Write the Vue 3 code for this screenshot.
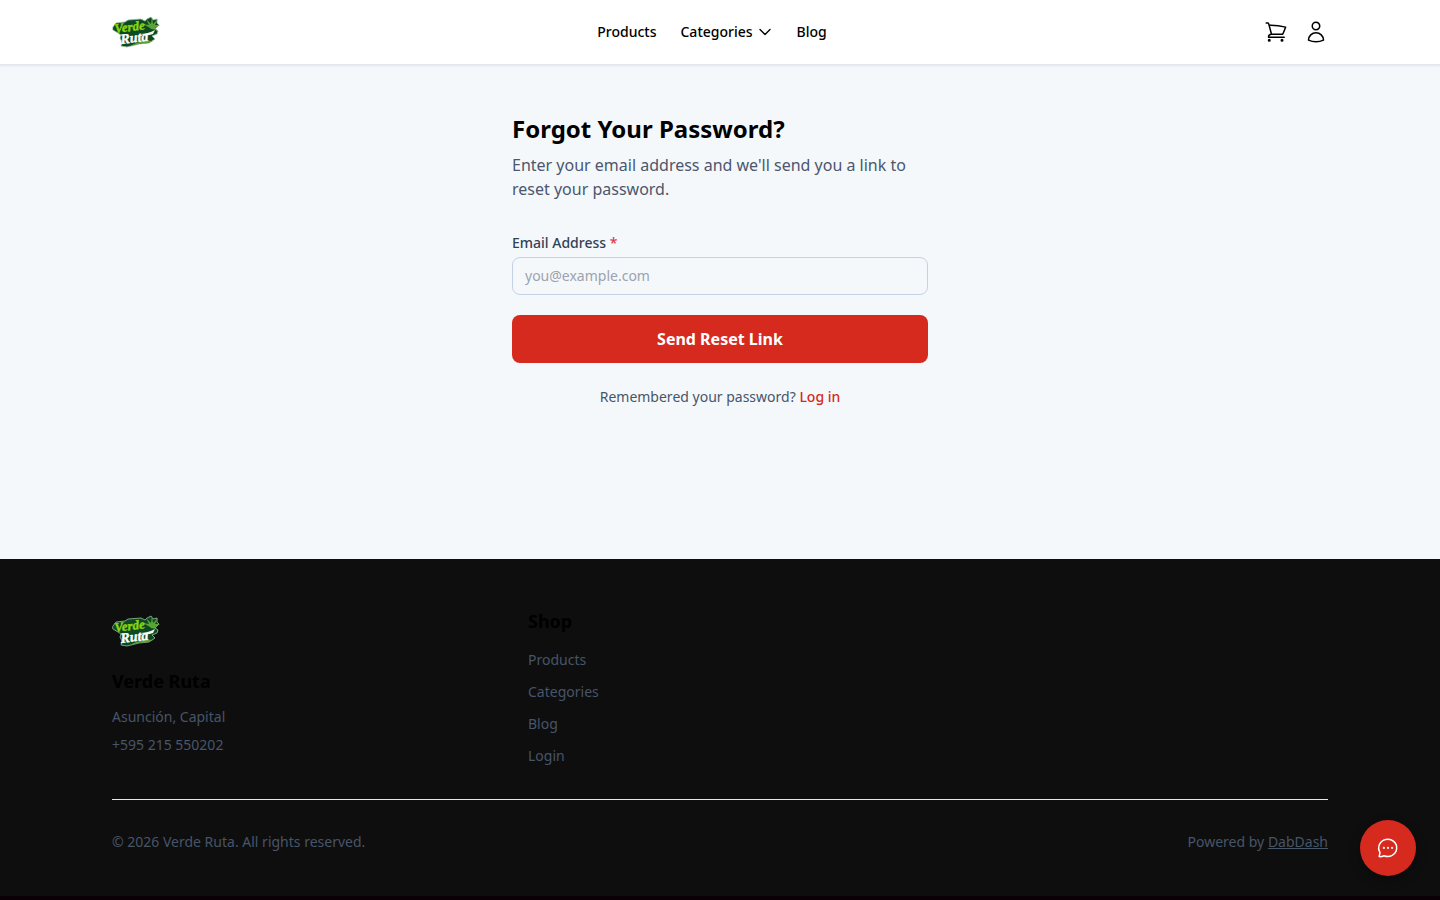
<script setup>
import { ref } from "vue";

const email = ref("");

const shopLinks = ["Products", "Categories", "Blog", "Login"];
</script>

<template>
  <div class="page">
    <header class="header">
      <div class="container header-inner">
        <a href="#" class="logo" aria-label="Verde Ruta">
          <svg viewBox="0 0 48 32">
            <!-- Logo artwork, reused in the footer -->
            <g id="brand-logo" stroke="none">
              <path
                d="M1 11 L4 7 L13 6 L16 4 L29 3 L33 5 L35 3 L39 1 L41 4 L45 3 L45 7 L47 9 L43 13 L46 15 L45 18 L40 20 L43 23 L37 27 L27 28 L15 31 L9 30 L10 26 L8 22 L9 19 L6 17 L1 14 Z"
                fill="#0b4a22"
                stroke="#9dbb9c"
                stroke-width=".8"
              />
              <path
                d="M38 12 L31 8 L37 9 L34 3 L39 8 L40 1 L41 8 L46 3 L43 9 L48 9 L43 12 L45 14 L39 13 Z"
                fill="#5aa334"
              />
              <path d="M18 30 Q28 24 41 25 L36 27 Q27 27 18 30 Z" fill="#5aa334" />
              <path d="M27 18 Q36 18 43 14 L41 18 Q36 20 32 19 Z" fill="#f2f6ee" />
              <text x="3" y="17" class="logo-verde" transform="rotate(-7 3 17)">Verde</text>
              <text x="9" y="28" class="logo-ruta" transform="rotate(-7 9 28)">Ruta</text>
            </g>
          </svg>
        </a>

        <nav class="nav">
          <a href="#">Products</a>
          <button type="button">
            Categories
            <svg viewBox="0 0 24 24" class="chevron">
              <path d="m19.5 8.25-7.5 7.5-7.5-7.5" />
            </svg>
          </button>
          <a href="#">Blog</a>
        </nav>

        <div class="actions">
          <a href="#" aria-label="Cart">
            <svg viewBox="0 0 24 24">
              <path
                d="M2.25 3h1.386c.51 0 .955.343 1.087.835l.383 1.437M7.5 14.25a3 3 0 0 0-3 3h15.75m-12.75-3h11.218c1.121-2.3 2.1-4.684 2.924-7.138a60.114 60.114 0 0 0-16.536-1.84M7.5 14.25 5.106 5.272M6 20.25a.75.75 0 1 1-1.5 0 .75.75 0 0 1 1.5 0Zm12.75 0a.75.75 0 1 1-1.5 0 .75.75 0 0 1 1.5 0Z"
              />
            </svg>
          </a>
          <a href="#" aria-label="Account">
            <svg viewBox="0 0 24 24">
              <path
                d="M15.75 6a3.75 3.75 0 1 1-7.5 0 3.75 3.75 0 0 1 7.5 0ZM4.501 20.118a7.5 7.5 0 0 1 14.998 0A17.933 17.933 0 0 1 12 21.75c-2.676 0-5.216-.584-7.499-1.632Z"
              />
            </svg>
          </a>
        </div>
      </div>
    </header>

    <main class="main">
      <h1>Forgot Your Password?</h1>
      <p class="intro">Enter your email address and we'll send you a link to reset your password.</p>

      <form @submit.prevent>
        <label for="email">Email Address <span class="required">*</span></label>
        <input id="email" v-model="email" type="email" placeholder="you@example.com" required />
        <button type="submit" class="submit">Send Reset Link</button>
      </form>

      <p class="login">Remembered your password? <a href="#">Log in</a></p>
    </main>

    <footer class="footer">
      <div class="container">
        <div class="columns">
          <div>
            <a href="#" class="logo" aria-label="Verde Ruta">
              <svg viewBox="0 0 48 32"><use href="#brand-logo" /></svg>
            </a>
            <h2 class="store-name">Verde Ruta</h2>
            <address>
              <p>Asunción, Capital</p>
              <p>+595 215 550202</p>
            </address>
          </div>
          <div>
            <h2>Shop</h2>
            <ul>
              <li v-for="link in shopLinks" :key="link">
                <a href="#">{{ link }}</a>
              </li>
            </ul>
          </div>
        </div>

        <div class="legal">
          <p>© 2026 Verde Ruta. All rights reserved.</p>
          <p>Powered by <a href="#">DabDash</a></p>
        </div>
      </div>
    </footer>

    <button type="button" class="chat" aria-label="Open chat">
      <svg viewBox="0 0 24 24">
        <path
          d="M8.625 9.75a.375.375 0 1 1-.75 0 .375.375 0 0 1 .75 0Zm4.125 0a.375.375 0 1 1-.75 0 .375.375 0 0 1 .75 0Zm4.125 0a.375.375 0 1 1-.75 0 .375.375 0 0 1 .75 0Z"
          transform="translate(-.4 2.2)"
        />
        <path d="M3.2 20.6 4 16.3A9 8.6 0 1 1 8 19.7Q5.500 20.900 3.200 20.600Z" />
      </svg>
    </button>
  </div>
</template>

<style>
body {
  margin: 0;
  background: #0a0005;
}
</style>

<style scoped>
.page {
  background: #f4f8fb;
  color: #000;
  font-family: "Noto Sans", sans-serif;
  font-size: 14px;
  line-height: 20px;
}
h1, h2, p, ul { margin: 0; padding: 0; }
a { color: inherit; text-decoration: none; }
button, input { font: inherit; color: inherit; }
button { padding: 0; border: 0; background: none; cursor: pointer; }
svg {
  display: block;
  fill: none;
  stroke: currentColor;
  stroke-width: 1.5;
  stroke-linecap: round;
  stroke-linejoin: round;
}

.logo-verde, .logo-ruta {
  font-family: "Liberation Serif", serif;
  font-style: italic;
  font-weight: 700;
  stroke-width: 0.4;
}
.logo-verde { font-size: 13px; fill: #8ed411; stroke: #8ed411; }
.logo-ruta { font-size: 14px; fill: #fff; stroke: #fff; }

.container {
  max-width: 1216px;
  margin: 0 auto;
  padding: 0 32px;
}

.header {
  background: #fff;
  border-bottom: 1px solid #e2e8f0;
  box-shadow: 0 1px 2px rgba(0, 0, 0, 0.08);
}
.header-inner {
  display: flex;
  justify-content: space-between;
  align-items: center;
  height: 64px;
}
.logo { display: block; width: 48px; }
.logo svg { width: 48px; height: 32px; }
.nav { display: flex; gap: 24px; font-weight: 500; }
.nav button { display: flex; align-items: center; gap: 4px; }
.chevron { width: 16px; height: 16px; stroke-width: 2; }
.actions { display: flex; gap: 16px; }
.actions svg { width: 24px; height: 24px; }

.main {
  max-width: 416px;
  margin: 0 auto;
  padding: 48px 16px 152px;
}
h1 { font-size: 24px; line-height: 32px; font-weight: 700; }
.intro {
  margin-top: 8px;
  font-size: 16px;
  line-height: 24px;
  color: #4c566c;
}
form { display: flex; flex-direction: column; margin-top: 32px; }
label { color: #334155; font-weight: 500; }
.required { color: #dc3a50; }
input {
  margin-top: 4px;
  padding: 8px 12px;
  border: 1px solid #c5d2e6;
  border-radius: 8px;
  background: transparent;
  line-height: 20px;
}
input::placeholder { color: #9ca3af; }
.submit {
  height: 48px;
  margin-top: 20px;
  border-radius: 8px;
  background: #d62a1e;
  color: #fff;
  font-size: 16px;
  font-weight: 700;
}
.login { margin-top: 24px; text-align: center; color: #475569; }
.login a { color: #d62a1e; font-weight: 500; }

.footer {
  padding: 48px 0 44px;
  background: #0e0e0e;
  color: #475569;
}
.columns {
  display: grid;
  grid-template-columns: repeat(3, 1fr);
  gap: 32px;
}
.columns h2 {
  color: #000;
  font-size: 18px;
  line-height: 28px;
  font-weight: 700;
}
.footer .logo { padding: 8px 0; }
.columns .store-name { margin-top: 12px; }
address { display: grid; gap: 8px; margin-top: 12px; font-style: normal; }
ul { display: grid; gap: 12px; margin-top: 15px; list-style: none; }
.legal {
  display: flex;
  justify-content: space-between;
  margin-top: 33px;
  padding-top: 32px;
  border-top: 1px solid #e2e8f0;
}
.legal a { text-decoration: underline; }

.chat {
  position: fixed;
  right: 24px;
  bottom: 24px;
  display: grid;
  place-items: center;
  width: 56px;
  height: 56px;
  border-radius: 50%;
  background: #d62a1e;
  color: #fff;
  box-shadow: 0 4px 12px rgba(0, 0, 0, 0.3);
}
.chat svg { width: 24px; height: 24px; }
</style>
